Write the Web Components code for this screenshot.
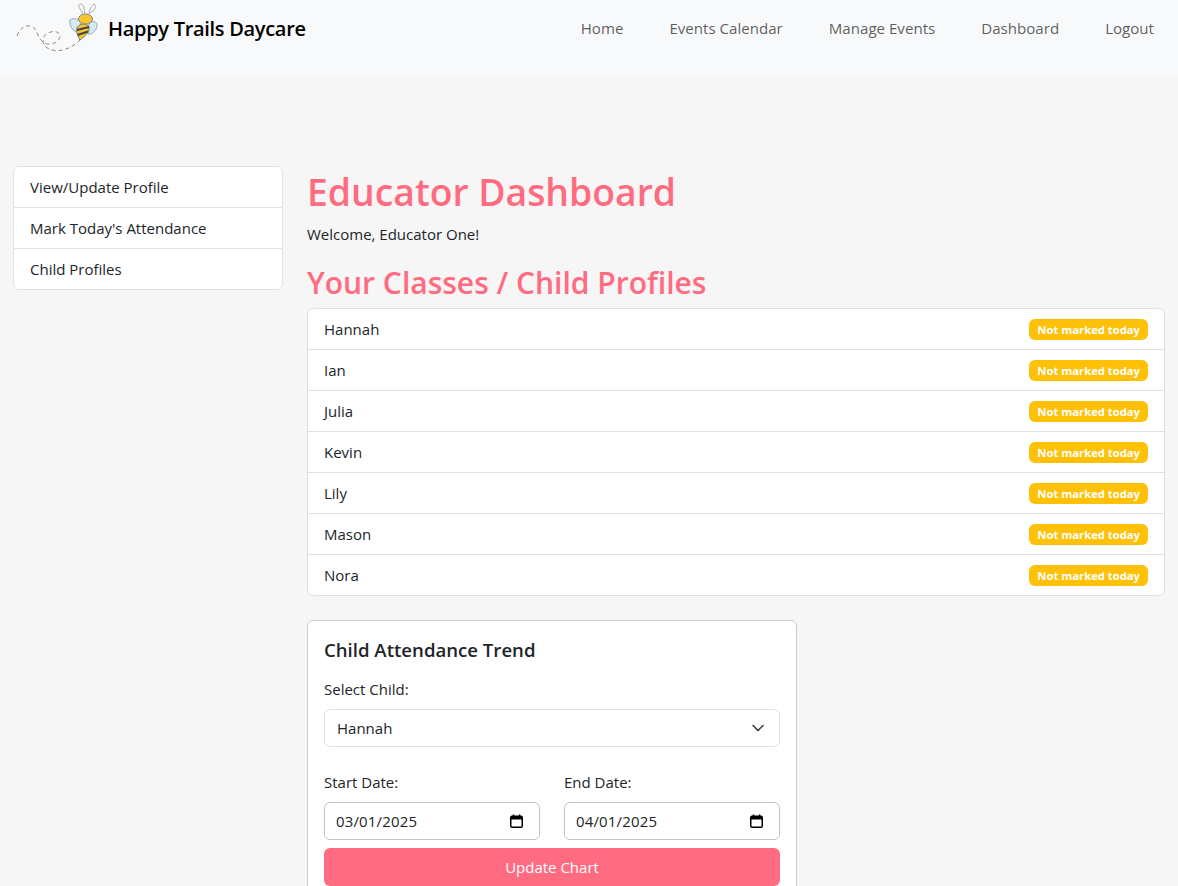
<!DOCTYPE html>
<html lang="en">
<head>
<meta charset="utf-8">
<title>Educator Dashboard</title>
<style>
    html, body { margin: 0; height: 886px; overflow: hidden; }
    body {
        background: #f6f6f6;
        color: #212529;
        font-family: "Open Sans", "Noto Sans", sans-serif;
        font-size: 15px;
        line-height: 24px;
    }
    .layout {
        display: flex;
        gap: 24px;
        padding: 88px 13px 0;
    }
</style>
</head>
<body>
<site-navbar></site-navbar>
<div class="layout">
    <side-menu>
        <menu-row>View/Update Profile</menu-row>
        <menu-row>Mark Today's Attendance</menu-row>
        <menu-row>Child Profiles</menu-row>
    </side-menu>
    <educator-main>
        <child-row name="Hannah"></child-row>
        <child-row name="Ian"></child-row>
        <child-row name="Julia"></child-row>
        <child-row name="Kevin"></child-row>
        <child-row name="Lily"></child-row>
        <child-row name="Mason"></child-row>
        <child-row name="Nora"></child-row>
        <trend-card slot="card"></trend-card>
    </educator-main>
</div>

<script>
const navTemplate = document.createElement('template');
navTemplate.innerHTML = `
    <style>
        :host {
            display: flex;
            justify-content: space-between;
            height: 78px;
            background: #f8f9fa;
            padding: 0 24px 0 16px;
        }
        .brand { display: flex; align-items: flex-start; gap: 8px; }
        svg { width: 84px; height: 56px; display: block; }
        .name {
            font-size: 20px;
            font-weight: 600;
            color: #000;
            line-height: 58px;
            letter-spacing: -0.3px;
        }
        nav { display: flex; gap: 46px; height: 56px; align-items: center; }
        nav a { color: rgba(0,0,0,.65); font-size: 15.1px; text-decoration: none; }
    </style>
    <div class="brand">
        <svg viewBox="0 0 84 56">
            <path d="M1 36C3 29 9 25 14 26C22 27 20 36 27 42C32 46 42 44 44 37C45 32 38 30 32 33C26 36 26 43 29 46C34 52 50 54 64 40" fill="none" stroke="#888" stroke-width="1" stroke-dasharray="4 3"/>
            <path d="M54 20C58 17 63 19 65 24C65 29 62 33 60 32C56 30 53 25 54 20Z" fill="#d3ebf5" stroke="#9ab" stroke-width="1"/>
            <path d="M73 23C76 21 81 21 81 25C81 30 76 35 72 34Z" fill="#d3ebf5" stroke="#9ab" stroke-width="1"/>
            <path d="M61 28C63 23 72 23 73 27C74 32 69 36 64 40C62 36 60 32 61 28Z" fill="#f8c62c" stroke="#777" stroke-width="1"/>
            <path d="M61 30L73 27M61.500 35L72 31.500" stroke="#444" stroke-width="2"/>
            <ellipse cx="69.500" cy="19" rx="7" ry="5" fill="#f8c62c" stroke="#888"/>
            <path d="M67 14C65 10 62 7 63 5C65 2 68 6 68 9L69 14M73 14C74 10 75 5 78 4C81 5 79 11 74 13" fill="none" stroke="#aaa" stroke-width="1"/>
        </svg>
        <span class="name">Happy Trails Daycare</span>
    </div>
    <nav>
        <a href="#">Home</a>
        <a href="#">Events Calendar</a>
        <a href="#">Manage Events</a>
        <a href="#">Dashboard</a>
        <a href="#">Logout</a>
    </nav>
`;
class SiteNavbar extends HTMLElement {
    constructor() {
        super();
        this.attachShadow({mode: 'open'});
        this.shadowRoot.appendChild(navTemplate.content.cloneNode(true));
    }
}
customElements.define('site-navbar', SiteNavbar);

const sideTemplate = document.createElement('template');
sideTemplate.innerHTML = `
    <style>
        :host {
            display: block;
            flex: 0 0 270px;
            align-self: flex-start;
            background: #fff;
            border: 1px solid #dee2e6;
            border-radius: 6px;
            box-sizing: border-box;
            overflow: hidden;
        }
    </style>
    <slot></slot>
`;
class SideMenu extends HTMLElement {
    constructor() {
        super();
        this.attachShadow({mode: 'open'});
        this.shadowRoot.appendChild(sideTemplate.content.cloneNode(true));
    }
}
customElements.define('side-menu', SideMenu);

const menuRowTemplate = document.createElement('template');
menuRowTemplate.innerHTML = `
    <style>
        :host {
            display: block;
            height: 40px;
            line-height: 40px;
            padding: 0 16px;
            border-top: 1px solid #dee2e6;
        }
        :host(:first-child) { border-top: 0; }
    </style>
    <slot></slot>
`;
class MenuRow extends HTMLElement {
    constructor() {
        super();
        this.attachShadow({mode: 'open'});
        this.shadowRoot.appendChild(menuRowTemplate.content.cloneNode(true));
    }
}
customElements.define('menu-row', MenuRow);

const mainTemplate = document.createElement('template');
mainTemplate.innerHTML = `
    <style>
        :host { display: block; flex: 1; min-width: 0; }
        h1, h2 { margin: 0; color: #ff6b81; font-weight: 600; }
        h1 { font-size: 37.3px; line-height: 48px; margin-top: 2px; }
        p { margin: 6px 0 0; }
        h2 { font-size: 30px; line-height: 38px; margin-top: 18px; }
        .list {
            margin-top: 6px;
            background: #fff;
            border: 1px solid #dee2e6;
            border-radius: 6px;
            overflow: hidden;
        }
        .card-wrap { margin-top: 24px; }
    </style>
    <h1>Educator Dashboard</h1>
    <p>Welcome, Educator One!</p>
    <h2>Your Classes / Child Profiles</h2>
    <div class="list"><slot></slot></div>
    <div class="card-wrap"><slot name="card"></slot></div>
`;
class EducatorMain extends HTMLElement {
    constructor() {
        super();
        this.attachShadow({mode: 'open'});
        this.shadowRoot.appendChild(mainTemplate.content.cloneNode(true));
    }
}
customElements.define('educator-main', EducatorMain);

const childTemplate = document.createElement('template');
childTemplate.innerHTML = `
    <style>
        :host {
            display: flex;
            justify-content: space-between;
            align-items: center;
            height: 40px;
            padding: 0 16px;
            border-top: 1px solid #dee2e6;
        }
        :host(:first-child) { border-top: 0; }
        .badge {
            background: #ffc107;
            color: #fff;
            font-size: 11.25px;
            font-weight: 700;
            line-height: 21px;
            padding: 0 8px;
            border-radius: 6px;
        }
    </style>
    <span class="who"></span>
    <span class="badge">Not marked today</span>
`;
class ChildRow extends HTMLElement {
    constructor() {
        super();
        this.attachShadow({mode: 'open'});
        this.shadowRoot.appendChild(childTemplate.content.cloneNode(true));
    }
    connectedCallback() {
        this.shadowRoot.querySelector('.who').textContent = this.getAttribute('name');
    }
}
customElements.define('child-row', ChildRow);

const trendTemplate = document.createElement('template');
trendTemplate.innerHTML = `
    <style>
        :host {
            display: block;
            width: 490px;
            height: 400px;
            box-sizing: border-box;
            padding: 15px 16px;
            background: #fff;
            border: 1px solid #ccc;
            border-radius: 6px;
        }
        h3 { margin: 0; font-size: 18.6px; line-height: 28px; font-weight: 600; }
        label { display: block; }
        .first { margin-top: 13px; }
        .control {
            display: flex;
            justify-content: space-between;
            align-items: center;
            height: 38px;
            box-sizing: border-box;
            margin-top: 8px;
            padding: 0 12px;
            background: #fff;
            border: 1px solid #dee2e6;
            border-radius: 6px;
        }
        .select svg { margin-right: 3px; }
        .dates { display: grid; grid-template-columns: 1fr 1fr; gap: 24px; margin-top: 23px; }
        .date { border-color: #c4c4c4; padding: 0 16px 0 11px; }
        .date span { letter-spacing: .15px; }
        button {
            display: block;
            width: 100%;
            height: 38px;
            margin-top: 8px;
            border: 0;
            border-radius: 6px;
            background: #ff6b81;
            color: #fff;
            font: inherit;
        }
    </style>
    <h3>Child Attendance Trend</h3>
    <label class="first">Select Child:</label>
    <div class="control select">
        <span>Hannah</span>
        <svg width="12" height="12" viewBox="0 0 12 12"><path d="M1 3.500l5 5 5-5" fill="none" stroke="#343a40" stroke-width="1.500" stroke-linecap="round" stroke-linejoin="round"/></svg>
    </div>
    <div class="dates">
        <div>
            <label>Start Date:</label>
            <div class="control date"><span>03/01/2025</span><date-icon></date-icon></div>
        </div>
        <div>
            <label>End Date:</label>
            <div class="control date"><span>04/01/2025</span><date-icon></date-icon></div>
        </div>
    </div>
    <button>Update Chart</button>
`;
class TrendCard extends HTMLElement {
    constructor() {
        super();
        this.attachShadow({mode: 'open'});
        this.shadowRoot.appendChild(trendTemplate.content.cloneNode(true));
    }
}
customElements.define('trend-card', TrendCard);

class DateIcon extends HTMLElement {
    constructor() {
        super();
        this.attachShadow({mode: 'open'}).innerHTML = `
            <style>:host { display: block; width: 13px; height: 14px; } svg { display: block; }</style>
            <svg width="13" height="14" viewBox="0 0 13 14">
                <path d="M.75 3.500C.75 2.700 1.200 2.250 2 2.250H11C11.800 2.250 12.250 2.700 12.250 3.500V12C12.250 12.800 11.800 13.250 11 13.250H2C1.200 13.250 .75 12.800 .75 12Z" fill="none" stroke="#000" stroke-width="1.500"/>
                <path d="M.75 3H12.250V5.500H.75Z" fill="#000"/>
                <path d="M3.500 .5V2.500M9.500 .5V2.500" stroke="#000" stroke-width="1.500"/>
            </svg>`;
    }
}
customElements.define('date-icon', DateIcon);
</script>
</body>
</html>
